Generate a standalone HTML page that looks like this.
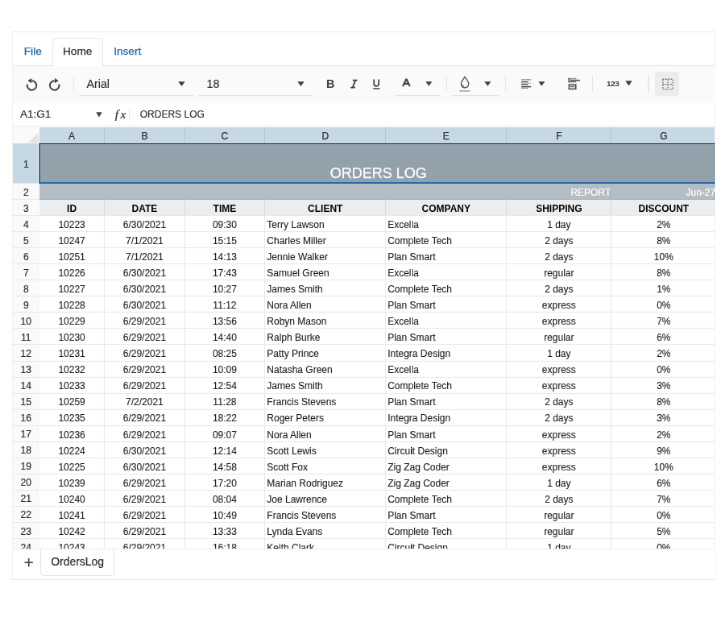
<!DOCTYPE html>
<html><head><meta charset="utf-8">
<style>
html,body{margin:0;padding:0;background:#fff;width:725px;height:636px;overflow:hidden;position:relative;font-family:"Liberation Sans", sans-serif;}
body div, body svg{position:absolute;}
.t{white-space:nowrap;}
</style></head><body>
<div id="w" style="left:0;top:0;width:900px;height:790px;transform:scale(0.805556);transform-origin:0 0;will-change:transform">
<div style="left:15.269px;top:38.607px;width:872.441px;height:681.020px;box-sizing:border-box;border:1px solid #f2f2f2;border-top-color:#e9e9e9;border-bottom-color:#e9e9e9;background:#fff"></div>
<div style="left:16.138px;top:80.565px;width:871.448px;height:1.117px;background:#e4e4e4"></div>
<div style="left:64.552px;top:47.172px;width:63.310px;height:34.759px;box-sizing:border-box;border:1px solid #e4e4e4;border-bottom:none;border-radius:5px 5px 0 0;background:#fff"></div>
<div class="t" style="left:29.793px;top:56.593px;font-size:13.655px;line-height:13.655px;color:#2567a3;-webkit-text-stroke:0.25px #2567a3">File</div>
<div class="t" style="left:77.959px;top:56.717px;font-size:13.655px;line-height:13.655px;color:#2f2f2f;-webkit-text-stroke:0.25px #2f2f2f">Home</div>
<div class="t" style="left:141.145px;top:56.593px;font-size:13.655px;line-height:13.655px;color:#2567a3;-webkit-text-stroke:0.25px #2567a3">Insert</div>
<div style="left:16.138px;top:81.683px;width:871.448px;height:46.055px;background:#fafafa"></div>
<svg style="left:28.552px;top:94.841px" width="22.345" height="19.862" viewBox="0 0 18 16"><path d="M8.45,4.2 A4.65,4.65 0 1 1 3.96,7.65" fill="none" stroke="#424242" stroke-width="1.6"/><polygon points="4.4,4.25 8.2,1.7 8.2,6.7" fill="#424242"/></svg>
<svg style="left:57.103px;top:94.841px" width="22.345" height="19.862" viewBox="0 0 18 16"><path d="M8.6,4.2 A4.65,4.65 0 1 0 13.09,7.65" fill="none" stroke="#424242" stroke-width="1.6"/><polygon points="12.6,4.25 8.8,1.7 8.8,6.7" fill="#424242"/></svg>
<div style="left:90.621px;top:94.345px;width:1.241px;height:19.862px;background:#e6e6e6"></div>
<div style="left:99.310px;top:117.931px;width:140.276px;height:1.241px;background:#e3e3e3"></div>
<div class="t" style="left:107.503px;top:96.784px;font-size:14.276px;line-height:14.276px;color:#2f2f2f;-webkit-text-stroke:0.15px #2f2f2f">Arial</div>
<svg style="left:220.345px;top:100.179px" width="10.924" height="8.193" viewBox="0 0 8.8 6.6"><polygon points="1,1 7.8,1 4.4,5.6" fill="#424242"/></svg>
<div style="left:247.034px;top:117.931px;width:140.276px;height:1.241px;background:#e3e3e3"></div>
<div class="t" style="left:256.469px;top:96.784px;font-size:14.276px;line-height:14.276px;color:#2f2f2f;-webkit-text-stroke:0.15px #2f2f2f">18</div>
<svg style="left:368.441px;top:100.179px" width="10.924" height="8.193" viewBox="0 0 8.8 6.6"><polygon points="1,1 7.8,1 4.4,5.6" fill="#424242"/></svg>
<div class="t" style="left:405.062px;top:97.052px;font-size:14.400px;line-height:14.400px;color:#424242;font-weight:bold">B</div>
<svg style="left:433.241px;top:98.069px" width="12.414" height="12.414" viewBox="0 0 10 10"><path d="M3.9,1.3 H8.5 M1.7,8.6 H6.3 M6.6,1.3 L3.8,8.6" fill="none" stroke="#424242" stroke-width="1.45"/></svg>
<svg style="left:461.793px;top:98.069px" width="12.414" height="13.655" viewBox="0 0 10 11"><path d="M1.8,0.5 V4.8 A2.1,2.1 0 0 0 6.6,4.8 V0.5" fill="none" stroke="#424242" stroke-width="1.4"/><rect x="1" y="9" width="6.6" height="1.2" fill="#424242"/></svg>
<svg style="left:496.551px;top:95.586px" width="14.897" height="18.621" viewBox="0 0 12 15"><path d="M2.5,9.0 L6,1.5 L9.5,9.0 M3.8,6.4 H8.2" fill="none" stroke="#424242" stroke-width="1.75" stroke-linejoin="bevel"/><rect x="1" y="13" width="10" height="1.5" fill="#ffffff"/></svg>
<svg style="left:526.841px;top:100.179px" width="10.676" height="7.945" viewBox="0 0 8.6 6.4"><polygon points="1,1 7.6,1 4.3,5.4" fill="#424242"/></svg>
<div style="left:490.345px;top:117.931px;width:55.862px;height:1.241px;background:#e3e3e3"></div>
<div style="left:553.655px;top:94.345px;width:1.241px;height:18.621px;background:#e6e6e6"></div>
<svg style="left:568.551px;top:93.103px" width="16.138" height="22.345" viewBox="0 0 13 18"><path d="M6.5,1.9 C7.8,3.9 10.3,6.4 10.3,9 A3.8,3.8 0 0 1 2.7,9 C2.7,6.4 5.2,3.9 6.5,1.9 Z" fill="none" stroke="#424242" stroke-width="0.95"/><path d="M4.1,9.6 A2.4,2.4 0 0 0 5.9,11.5" fill="none" stroke="#424242" stroke-width="0.8"/><rect x="1.1" y="15.3" width="10.6" height="1.5" fill="#a3b4c0"/></svg>
<svg style="left:599.586px;top:100.179px" width="10.676" height="7.945" viewBox="0 0 8.6 6.4"><polygon points="1,1 7.6,1 4.3,5.4" fill="#424242"/></svg>
<div style="left:562.345px;top:117.931px;width:57.103px;height:1.241px;background:#e3e3e3"></div>
<div style="left:626.896px;top:94.345px;width:1.241px;height:18.621px;background:#e6e6e6"></div>
<svg style="left:645.517px;top:95.586px" width="14.897" height="14.897" viewBox="0 0 12 12"><rect x="0.9" y="1.9" width="9.7" height="0.8" fill="#6e6e6e"/><rect x="0.9" y="4.0" width="7" height="1.0" fill="#3e3e3e"/><rect x="0.9" y="5.4" width="9.7" height="0.8" fill="#b4b4b4"/><rect x="0.9" y="6.7" width="7" height="1.0" fill="#3e3e3e"/><rect x="0.9" y="8.9" width="9.7" height="1.0" fill="#3e3e3e"/><rect x="0.9" y="10.2" width="7" height="1.0" fill="#858585"/></svg>
<svg style="left:667.365px;top:100.179px" width="10.676" height="7.945" viewBox="0 0 8.6 6.4"><polygon points="1,1 7.6,1 4.3,5.4" fill="#424242"/></svg>
<svg style="left:702.620px;top:94.345px" width="19.862" height="19.862" viewBox="0 0 16 16"><rect x="2.1" y="2.3" width="7.9" height="1.2" fill="#9a9a9a"/><rect x="2.1" y="2.3" width="1.2" height="4.3" fill="#424242"/><rect x="2.1" y="5.6" width="7.9" height="1.0" fill="#505050"/><rect x="4" y="4.0" width="9.7" height="1.1" fill="#424242"/><rect x="2.7" y="9.0" width="6.8" height="4.2" fill="none" stroke="#424242" stroke-width="1.2"/><rect x="4" y="10.3" width="4.5" height="1.2" fill="#707070"/></svg>
<div style="left:734.896px;top:94.345px;width:1.241px;height:19.862px;background:#e6e6e6"></div>
<div class="t" style="left:752.896px;top:99.345px;font-size:9.931px;line-height:9.931px;color:#424242;font-weight:bold;letter-spacing:-0.35px">123</div>
<svg style="left:774.744px;top:99.434px" width="10.924" height="8.690" viewBox="0 0 8.8 7"><polygon points="1,1 7.8,1 4.4,6" fill="#424242"/></svg>
<div style="left:804.413px;top:94.345px;width:1.241px;height:19.862px;background:#e6e6e6"></div>
<div style="left:813.103px;top:89.379px;width:29.793px;height:29.793px;background:#ececec;border-radius:3px"></div>
<svg style="left:820.551px;top:95.586px" width="16.138" height="16.138" viewBox="0 0 13 13"><g fill="none" stroke="#6a6a6a" stroke-width="1.05" stroke-dasharray="1.3,1.3"><rect x="1.5" y="1.8" width="10" height="10.2"/><path d="M6.5,1.8 V12 M1.5,6.9 H11.5"/></g></svg>
<div class="t" style="left:25.076px;top:135.277px;font-size:13.531px;line-height:13.531px;color:#2f2f2f;-webkit-text-stroke:0.2px #2f2f2f">A1:G1</div>
<svg style="left:117.931px;top:137.545px" width="9.931" height="8.690" viewBox="0 0 8 7"><polygon points="1,1 7,1 4.0,6" fill="#424242"/></svg>
<div class="t" style="left:142.759px;top:134.446px;font-size:15.393px;line-height:15.393px;color:#2f2f2f;letter-spacing:2.6px;-webkit-text-stroke:0.2px #2f2f2f;font-family:'Liberation Serif',serif;font-style:italic">fx</div>
<div style="left:160.138px;top:134.069px;width:1.241px;height:16.138px;background:#e6e6e6"></div>
<div class="t" style="left:173.793px;top:136.321px;font-size:12.004px;line-height:12.004px;color:#2f2f2f;-webkit-text-stroke:0.15px #2f2f2f">ORDERS LOG</div>
<div style="left:16.138px;top:156.290px;width:871.448px;height:1.117px;background:#ebebeb"></div>
<div style="left:0;top:0;width:887.089px;height:681.641px;overflow:hidden">
<div style="left:16.138px;top:157.655px;width:32.652px;height:19.862px;background:#fafafa"></div>
<svg style="left:16.138px;top:157.655px" width="32.276" height="19.862" viewBox="0 0 26 16"><polygon points="25.6,5.5 25.6,15.6 15,15.6" fill="#e4e4e4"/></svg>
<div style="left:48.790px;top:157.655px;width:869.831px;height:19.862px;background:#c6d8e3"></div>
<div style="left:129.348px;top:157.655px;width:1.000px;height:19.862px;background:#b4c7d3"></div>
<div class="t" style="left:-159.207px;width:496.551px;text-align:center;top:162.638px;font-size:12.004px;line-height:12.004px;color:#2f2f2f;-webkit-text-stroke:0.25px #2f2f2f">A</div>
<div style="left:228.534px;top:157.655px;width:1.000px;height:19.862px;background:#b4c7d3"></div>
<div class="t" style="left:-68.834px;width:496.551px;text-align:center;top:162.638px;font-size:12.004px;line-height:12.004px;color:#2f2f2f;-webkit-text-stroke:0.25px #2f2f2f">B</div>
<div style="left:328.341px;top:157.655px;width:1.000px;height:19.862px;background:#b4c7d3"></div>
<div class="t" style="left:30.662px;width:496.551px;text-align:center;top:162.638px;font-size:12.004px;line-height:12.004px;color:#2f2f2f;-webkit-text-stroke:0.25px #2f2f2f">C</div>
<div style="left:478.176px;top:157.655px;width:1.000px;height:19.862px;background:#b4c7d3"></div>
<div class="t" style="left:155.483px;width:496.551px;text-align:center;top:162.638px;font-size:12.004px;line-height:12.004px;color:#2f2f2f;-webkit-text-stroke:0.25px #2f2f2f">D</div>
<div style="left:628.382px;top:157.655px;width:1.000px;height:19.862px;background:#b4c7d3"></div>
<div class="t" style="left:305.503px;width:496.551px;text-align:center;top:162.638px;font-size:12.004px;line-height:12.004px;color:#2f2f2f;-webkit-text-stroke:0.25px #2f2f2f">E</div>
<div style="left:758.355px;top:157.655px;width:1.000px;height:19.862px;background:#b4c7d3"></div>
<div class="t" style="left:445.593px;width:496.551px;text-align:center;top:162.638px;font-size:12.004px;line-height:12.004px;color:#2f2f2f;-webkit-text-stroke:0.25px #2f2f2f">F</div>
<div style="left:888.327px;top:157.655px;width:1.000px;height:19.862px;background:#b4c7d3"></div>
<div class="t" style="left:575.565px;width:496.551px;text-align:center;top:162.638px;font-size:12.004px;line-height:12.004px;color:#2f2f2f;-webkit-text-stroke:0.25px #2f2f2f">G</div>
<div style="left:16.138px;top:177.517px;width:32.652px;height:50.739px;background:#c6d8e3"></div>
<div style="left:16.138px;top:227.256px;width:32.652px;height:1.000px;background:#e8e8e8"></div>
<div class="t" style="left:-216.000px;width:496.551px;text-align:center;top:197.894px;font-size:12.004px;line-height:12.004px;color:#2f2f2f;-webkit-text-stroke:0.2px #2f2f2f">1</div>
<div style="left:16.138px;top:228.256px;width:32.652px;height:20.023px;background:#fafafa"></div>
<div style="left:16.138px;top:247.279px;width:32.652px;height:1.000px;background:#e8e8e8"></div>
<div class="t" style="left:-216.000px;width:496.551px;text-align:center;top:233.025px;font-size:12.004px;line-height:12.004px;color:#2f2f2f;-webkit-text-stroke:0.2px #2f2f2f">2</div>
<div style="left:16.138px;top:248.279px;width:32.652px;height:20.023px;background:#fafafa"></div>
<div style="left:16.138px;top:267.303px;width:32.652px;height:1.000px;background:#e8e8e8"></div>
<div class="t" style="left:-216.000px;width:496.551px;text-align:center;top:253.048px;font-size:12.004px;line-height:12.004px;color:#2f2f2f;-webkit-text-stroke:0.2px #2f2f2f">3</div>
<div style="left:16.138px;top:268.303px;width:32.652px;height:20.023px;background:#fafafa"></div>
<div style="left:16.138px;top:287.326px;width:32.652px;height:1.000px;background:#e8e8e8"></div>
<div class="t" style="left:-216.000px;width:496.551px;text-align:center;top:273.071px;font-size:12.004px;line-height:12.004px;color:#2f2f2f;-webkit-text-stroke:0.2px #2f2f2f">4</div>
<div style="left:16.138px;top:288.326px;width:32.652px;height:20.023px;background:#fafafa"></div>
<div style="left:16.138px;top:307.349px;width:32.652px;height:1.000px;background:#e8e8e8"></div>
<div class="t" style="left:-216.000px;width:496.551px;text-align:center;top:293.095px;font-size:12.004px;line-height:12.004px;color:#2f2f2f;-webkit-text-stroke:0.2px #2f2f2f">5</div>
<div style="left:16.138px;top:308.350px;width:32.652px;height:20.023px;background:#fafafa"></div>
<div style="left:16.138px;top:327.373px;width:32.652px;height:1.000px;background:#e8e8e8"></div>
<div class="t" style="left:-216.000px;width:496.551px;text-align:center;top:313.118px;font-size:12.004px;line-height:12.004px;color:#2f2f2f;-webkit-text-stroke:0.2px #2f2f2f">6</div>
<div style="left:16.138px;top:328.373px;width:32.652px;height:20.023px;background:#fafafa"></div>
<div style="left:16.138px;top:347.396px;width:32.652px;height:1.000px;background:#e8e8e8"></div>
<div class="t" style="left:-216.000px;width:496.551px;text-align:center;top:333.142px;font-size:12.004px;line-height:12.004px;color:#2f2f2f;-webkit-text-stroke:0.2px #2f2f2f">7</div>
<div style="left:16.138px;top:348.396px;width:32.652px;height:20.023px;background:#fafafa"></div>
<div style="left:16.138px;top:367.420px;width:32.652px;height:1.000px;background:#e8e8e8"></div>
<div class="t" style="left:-216.000px;width:496.551px;text-align:center;top:353.165px;font-size:12.004px;line-height:12.004px;color:#2f2f2f;-webkit-text-stroke:0.2px #2f2f2f">8</div>
<div style="left:16.138px;top:368.420px;width:32.652px;height:20.023px;background:#fafafa"></div>
<div style="left:16.138px;top:387.443px;width:32.652px;height:1.000px;background:#e8e8e8"></div>
<div class="t" style="left:-216.000px;width:496.551px;text-align:center;top:373.189px;font-size:12.004px;line-height:12.004px;color:#2f2f2f;-webkit-text-stroke:0.2px #2f2f2f">9</div>
<div style="left:16.138px;top:388.443px;width:32.652px;height:20.023px;background:#fafafa"></div>
<div style="left:16.138px;top:407.467px;width:32.652px;height:1.000px;background:#e8e8e8"></div>
<div class="t" style="left:-216.000px;width:496.551px;text-align:center;top:393.212px;font-size:12.004px;line-height:12.004px;color:#2f2f2f;-webkit-text-stroke:0.2px #2f2f2f">10</div>
<div style="left:16.138px;top:408.467px;width:32.652px;height:20.023px;background:#fafafa"></div>
<div style="left:16.138px;top:427.490px;width:32.652px;height:1.000px;background:#e8e8e8"></div>
<div class="t" style="left:-216.000px;width:496.551px;text-align:center;top:413.236px;font-size:12.004px;line-height:12.004px;color:#2f2f2f;-webkit-text-stroke:0.2px #2f2f2f">11</div>
<div style="left:16.138px;top:428.490px;width:32.652px;height:20.023px;background:#fafafa"></div>
<div style="left:16.138px;top:447.514px;width:32.652px;height:1.000px;background:#e8e8e8"></div>
<div class="t" style="left:-216.000px;width:496.551px;text-align:center;top:433.259px;font-size:12.004px;line-height:12.004px;color:#2f2f2f;-webkit-text-stroke:0.2px #2f2f2f">12</div>
<div style="left:16.138px;top:448.514px;width:32.652px;height:20.023px;background:#fafafa"></div>
<div style="left:16.138px;top:467.537px;width:32.652px;height:1.000px;background:#e8e8e8"></div>
<div class="t" style="left:-216.000px;width:496.551px;text-align:center;top:453.282px;font-size:12.004px;line-height:12.004px;color:#2f2f2f;-webkit-text-stroke:0.2px #2f2f2f">13</div>
<div style="left:16.138px;top:468.537px;width:32.652px;height:20.023px;background:#fafafa"></div>
<div style="left:16.138px;top:487.560px;width:32.652px;height:1.000px;background:#e8e8e8"></div>
<div class="t" style="left:-216.000px;width:496.551px;text-align:center;top:473.306px;font-size:12.004px;line-height:12.004px;color:#2f2f2f;-webkit-text-stroke:0.2px #2f2f2f">14</div>
<div style="left:16.138px;top:488.560px;width:32.652px;height:20.023px;background:#fafafa"></div>
<div style="left:16.138px;top:507.584px;width:32.652px;height:1.000px;background:#e8e8e8"></div>
<div class="t" style="left:-216.000px;width:496.551px;text-align:center;top:493.329px;font-size:12.004px;line-height:12.004px;color:#2f2f2f;-webkit-text-stroke:0.2px #2f2f2f">15</div>
<div style="left:16.138px;top:508.584px;width:32.652px;height:20.023px;background:#fafafa"></div>
<div style="left:16.138px;top:527.607px;width:32.652px;height:1.000px;background:#e8e8e8"></div>
<div class="t" style="left:-216.000px;width:496.551px;text-align:center;top:513.353px;font-size:12.004px;line-height:12.004px;color:#2f2f2f;-webkit-text-stroke:0.2px #2f2f2f">16</div>
<div style="left:16.138px;top:528.607px;width:32.652px;height:20.023px;background:#fafafa"></div>
<div style="left:16.138px;top:547.631px;width:32.652px;height:1.000px;background:#e8e8e8"></div>
<div class="t" style="left:-216.000px;width:496.551px;text-align:center;top:533.376px;font-size:12.004px;line-height:12.004px;color:#2f2f2f;-webkit-text-stroke:0.2px #2f2f2f">17</div>
<div style="left:16.138px;top:548.631px;width:32.652px;height:20.023px;background:#fafafa"></div>
<div style="left:16.138px;top:567.654px;width:32.652px;height:1.000px;background:#e8e8e8"></div>
<div class="t" style="left:-216.000px;width:496.551px;text-align:center;top:553.400px;font-size:12.004px;line-height:12.004px;color:#2f2f2f;-webkit-text-stroke:0.2px #2f2f2f">18</div>
<div style="left:16.138px;top:568.654px;width:32.652px;height:20.023px;background:#fafafa"></div>
<div style="left:16.138px;top:587.678px;width:32.652px;height:1.000px;background:#e8e8e8"></div>
<div class="t" style="left:-216.000px;width:496.551px;text-align:center;top:573.423px;font-size:12.004px;line-height:12.004px;color:#2f2f2f;-webkit-text-stroke:0.2px #2f2f2f">19</div>
<div style="left:16.138px;top:588.678px;width:32.652px;height:20.023px;background:#fafafa"></div>
<div style="left:16.138px;top:607.701px;width:32.652px;height:1.000px;background:#e8e8e8"></div>
<div class="t" style="left:-216.000px;width:496.551px;text-align:center;top:593.446px;font-size:12.004px;line-height:12.004px;color:#2f2f2f;-webkit-text-stroke:0.2px #2f2f2f">20</div>
<div style="left:16.138px;top:608.701px;width:32.652px;height:20.023px;background:#fafafa"></div>
<div style="left:16.138px;top:627.724px;width:32.652px;height:1.000px;background:#e8e8e8"></div>
<div class="t" style="left:-216.000px;width:496.551px;text-align:center;top:613.470px;font-size:12.004px;line-height:12.004px;color:#2f2f2f;-webkit-text-stroke:0.2px #2f2f2f">21</div>
<div style="left:16.138px;top:628.725px;width:32.652px;height:20.023px;background:#fafafa"></div>
<div style="left:16.138px;top:647.748px;width:32.652px;height:1.000px;background:#e8e8e8"></div>
<div class="t" style="left:-216.000px;width:496.551px;text-align:center;top:633.493px;font-size:12.004px;line-height:12.004px;color:#2f2f2f;-webkit-text-stroke:0.2px #2f2f2f">22</div>
<div style="left:16.138px;top:648.748px;width:32.652px;height:20.023px;background:#fafafa"></div>
<div style="left:16.138px;top:667.771px;width:32.652px;height:1.000px;background:#e8e8e8"></div>
<div class="t" style="left:-216.000px;width:496.551px;text-align:center;top:653.517px;font-size:12.004px;line-height:12.004px;color:#2f2f2f;-webkit-text-stroke:0.2px #2f2f2f">23</div>
<div style="left:16.138px;top:668.771px;width:32.652px;height:20.023px;background:#fafafa"></div>
<div style="left:16.138px;top:687.795px;width:32.652px;height:1.000px;background:#e8e8e8"></div>
<div class="t" style="left:-216.000px;width:496.551px;text-align:center;top:673.540px;font-size:12.004px;line-height:12.004px;color:#2f2f2f;-webkit-text-stroke:0.2px #2f2f2f">24</div>
<div style="left:47.790px;top:177.517px;width:1.000px;height:504.000px;background:#e8e8e8"></div>
<div style="left:48.790px;top:177.517px;width:869.831px;height:50.739px;background:#93a1ab"></div>
<div style="left:48.790px;top:228.256px;width:869.831px;height:20.023px;background:#b3bdc3"></div>
<div style="left:48.790px;top:247.279px;width:869.831px;height:1.000px;background:#a7b1b7"></div>
<div style="left:758.355px;top:228.256px;width:1.000px;height:20.023px;background:#a9b3b9"></div>
<div style="left:48.790px;top:248.279px;width:869.831px;height:20.023px;background:#ebeef1"></div>
<div style="left:129.348px;top:248.279px;width:1.000px;height:20.023px;background:#d6dadd"></div>
<div style="left:228.534px;top:248.279px;width:1.000px;height:20.023px;background:#d6dadd"></div>
<div style="left:328.341px;top:248.279px;width:1.000px;height:20.023px;background:#d6dadd"></div>
<div style="left:478.176px;top:248.279px;width:1.000px;height:20.023px;background:#d6dadd"></div>
<div style="left:628.382px;top:248.279px;width:1.000px;height:20.023px;background:#d6dadd"></div>
<div style="left:758.355px;top:248.279px;width:1.000px;height:20.023px;background:#d6dadd"></div>
<div style="left:888.327px;top:248.279px;width:1.000px;height:20.023px;background:#d6dadd"></div>
<div style="left:48.790px;top:267.303px;width:869.831px;height:1.000px;background:#e8e8e8"></div>
<div style="left:48.790px;top:287.326px;width:869.831px;height:1.000px;background:#e8e8e8"></div>
<div style="left:48.790px;top:307.349px;width:869.831px;height:1.000px;background:#e8e8e8"></div>
<div style="left:48.790px;top:327.373px;width:869.831px;height:1.000px;background:#e8e8e8"></div>
<div style="left:48.790px;top:347.396px;width:869.831px;height:1.000px;background:#e8e8e8"></div>
<div style="left:48.790px;top:367.420px;width:869.831px;height:1.000px;background:#e8e8e8"></div>
<div style="left:48.790px;top:387.443px;width:869.831px;height:1.000px;background:#e8e8e8"></div>
<div style="left:48.790px;top:407.467px;width:869.831px;height:1.000px;background:#e8e8e8"></div>
<div style="left:48.790px;top:427.490px;width:869.831px;height:1.000px;background:#e8e8e8"></div>
<div style="left:48.790px;top:447.514px;width:869.831px;height:1.000px;background:#e8e8e8"></div>
<div style="left:48.790px;top:467.537px;width:869.831px;height:1.000px;background:#e8e8e8"></div>
<div style="left:48.790px;top:487.560px;width:869.831px;height:1.000px;background:#e8e8e8"></div>
<div style="left:48.790px;top:507.584px;width:869.831px;height:1.000px;background:#e8e8e8"></div>
<div style="left:48.790px;top:527.607px;width:869.831px;height:1.000px;background:#e8e8e8"></div>
<div style="left:48.790px;top:547.631px;width:869.831px;height:1.000px;background:#e8e8e8"></div>
<div style="left:48.790px;top:567.654px;width:869.831px;height:1.000px;background:#e8e8e8"></div>
<div style="left:48.790px;top:587.678px;width:869.831px;height:1.000px;background:#e8e8e8"></div>
<div style="left:48.790px;top:607.701px;width:869.831px;height:1.000px;background:#e8e8e8"></div>
<div style="left:48.790px;top:627.724px;width:869.831px;height:1.000px;background:#e8e8e8"></div>
<div style="left:48.790px;top:647.748px;width:869.831px;height:1.000px;background:#e8e8e8"></div>
<div style="left:48.790px;top:667.771px;width:869.831px;height:1.000px;background:#e8e8e8"></div>
<div style="left:48.790px;top:687.795px;width:869.831px;height:1.000px;background:#e8e8e8"></div>
<div style="left:129.348px;top:268.303px;width:1.000px;height:413.214px;background:#e8e8e8"></div>
<div style="left:228.534px;top:268.303px;width:1.000px;height:413.214px;background:#e8e8e8"></div>
<div style="left:328.341px;top:268.303px;width:1.000px;height:413.214px;background:#e8e8e8"></div>
<div style="left:478.176px;top:268.303px;width:1.000px;height:413.214px;background:#e8e8e8"></div>
<div style="left:628.382px;top:268.303px;width:1.000px;height:413.214px;background:#e8e8e8"></div>
<div style="left:758.355px;top:268.303px;width:1.000px;height:413.214px;background:#e8e8e8"></div>
<div style="left:888.327px;top:268.303px;width:1.000px;height:413.214px;background:#e8e8e8"></div>
<div style="left:48.041px;top:177.145px;width:868.965px;height:51.269px;box-sizing:border-box;border:2.359px solid #2a6aa6"></div>
<div class="t" style="left:221.586px;width:496.551px;text-align:center;top:206.225px;font-size:18.000px;line-height:18.000px;color:#fff;-webkit-text-stroke:0.25px #fff">ORDERS LOG</div>
<div class="t" style="left:261.683px;width:496.551px;text-align:right;top:233.149px;font-size:12.004px;line-height:12.004px;color:#ffffff;-webkit-text-stroke:0.2px #fff">REPORT</div>
<div class="t" style="left:391.655px;width:496.551px;text-align:right;top:233.149px;font-size:12.004px;line-height:12.004px;color:#ffffff;-webkit-text-stroke:0.2px #fff">Jun-27</div>
<div class="t" style="left:-159.207px;width:496.551px;text-align:center;top:253.420px;font-size:12.004px;line-height:12.004px;color:#000;font-weight:bold">ID</div>
<div class="t" style="left:-68.834px;width:496.551px;text-align:center;top:253.420px;font-size:12.004px;line-height:12.004px;color:#000;font-weight:bold">DATE</div>
<div class="t" style="left:30.662px;width:496.551px;text-align:center;top:253.420px;font-size:12.004px;line-height:12.004px;color:#000;font-weight:bold">TIME</div>
<div class="t" style="left:155.483px;width:496.551px;text-align:center;top:253.420px;font-size:12.004px;line-height:12.004px;color:#000;font-weight:bold">CLIENT</div>
<div class="t" style="left:305.503px;width:496.551px;text-align:center;top:253.420px;font-size:12.004px;line-height:12.004px;color:#000;font-weight:bold">COMPANY</div>
<div class="t" style="left:445.593px;width:496.551px;text-align:center;top:253.420px;font-size:12.004px;line-height:12.004px;color:#000;font-weight:bold">SHIPPING</div>
<div class="t" style="left:575.565px;width:496.551px;text-align:center;top:253.420px;font-size:12.004px;line-height:12.004px;color:#000;font-weight:bold">DISCOUNT</div>
<div class="t" style="left:-159.207px;width:496.551px;text-align:center;top:273.196px;font-size:12.004px;line-height:12.004px;color:#1f1f1f;-webkit-text-stroke:0.12px #1f1f1f">10223</div>
<div class="t" style="left:-68.834px;width:496.551px;text-align:center;top:273.196px;font-size:12.004px;line-height:12.004px;color:#1f1f1f;-webkit-text-stroke:0.12px #1f1f1f">6/30/2021</div>
<div class="t" style="left:30.662px;width:496.551px;text-align:center;top:273.196px;font-size:12.004px;line-height:12.004px;color:#1f1f1f;-webkit-text-stroke:0.12px #1f1f1f">09:30</div>
<div class="t" style="left:331.324px;top:273.196px;font-size:12.004px;line-height:12.004px;color:#1f1f1f;-webkit-text-stroke:0.12px #1f1f1f">Terry Lawson</div>
<div class="t" style="left:481.158px;top:273.196px;font-size:12.004px;line-height:12.004px;color:#1f1f1f;-webkit-text-stroke:0.12px #1f1f1f">Excella</div>
<div class="t" style="left:445.593px;width:496.551px;text-align:center;top:273.196px;font-size:12.004px;line-height:12.004px;color:#1f1f1f;-webkit-text-stroke:0.12px #1f1f1f">1 day</div>
<div class="t" style="left:575.565px;width:496.551px;text-align:center;top:273.196px;font-size:12.004px;line-height:12.004px;color:#1f1f1f;-webkit-text-stroke:0.12px #1f1f1f">2%</div>
<div class="t" style="left:-159.207px;width:496.551px;text-align:center;top:293.219px;font-size:12.004px;line-height:12.004px;color:#1f1f1f;-webkit-text-stroke:0.12px #1f1f1f">10247</div>
<div class="t" style="left:-68.834px;width:496.551px;text-align:center;top:293.219px;font-size:12.004px;line-height:12.004px;color:#1f1f1f;-webkit-text-stroke:0.12px #1f1f1f">7/1/2021</div>
<div class="t" style="left:30.662px;width:496.551px;text-align:center;top:293.219px;font-size:12.004px;line-height:12.004px;color:#1f1f1f;-webkit-text-stroke:0.12px #1f1f1f">15:15</div>
<div class="t" style="left:331.324px;top:293.219px;font-size:12.004px;line-height:12.004px;color:#1f1f1f;-webkit-text-stroke:0.12px #1f1f1f">Charles Miller</div>
<div class="t" style="left:481.158px;top:293.219px;font-size:12.004px;line-height:12.004px;color:#1f1f1f;-webkit-text-stroke:0.12px #1f1f1f">Complete Tech</div>
<div class="t" style="left:445.593px;width:496.551px;text-align:center;top:293.219px;font-size:12.004px;line-height:12.004px;color:#1f1f1f;-webkit-text-stroke:0.12px #1f1f1f">2 days</div>
<div class="t" style="left:575.565px;width:496.551px;text-align:center;top:293.219px;font-size:12.004px;line-height:12.004px;color:#1f1f1f;-webkit-text-stroke:0.12px #1f1f1f">8%</div>
<div class="t" style="left:-159.207px;width:496.551px;text-align:center;top:313.242px;font-size:12.004px;line-height:12.004px;color:#1f1f1f;-webkit-text-stroke:0.12px #1f1f1f">10251</div>
<div class="t" style="left:-68.834px;width:496.551px;text-align:center;top:313.242px;font-size:12.004px;line-height:12.004px;color:#1f1f1f;-webkit-text-stroke:0.12px #1f1f1f">7/1/2021</div>
<div class="t" style="left:30.662px;width:496.551px;text-align:center;top:313.242px;font-size:12.004px;line-height:12.004px;color:#1f1f1f;-webkit-text-stroke:0.12px #1f1f1f">14:13</div>
<div class="t" style="left:331.324px;top:313.242px;font-size:12.004px;line-height:12.004px;color:#1f1f1f;-webkit-text-stroke:0.12px #1f1f1f">Jennie Walker</div>
<div class="t" style="left:481.158px;top:313.242px;font-size:12.004px;line-height:12.004px;color:#1f1f1f;-webkit-text-stroke:0.12px #1f1f1f">Plan Smart</div>
<div class="t" style="left:445.593px;width:496.551px;text-align:center;top:313.242px;font-size:12.004px;line-height:12.004px;color:#1f1f1f;-webkit-text-stroke:0.12px #1f1f1f">2 days</div>
<div class="t" style="left:575.565px;width:496.551px;text-align:center;top:313.242px;font-size:12.004px;line-height:12.004px;color:#1f1f1f;-webkit-text-stroke:0.12px #1f1f1f">10%</div>
<div class="t" style="left:-159.207px;width:496.551px;text-align:center;top:333.266px;font-size:12.004px;line-height:12.004px;color:#1f1f1f;-webkit-text-stroke:0.12px #1f1f1f">10226</div>
<div class="t" style="left:-68.834px;width:496.551px;text-align:center;top:333.266px;font-size:12.004px;line-height:12.004px;color:#1f1f1f;-webkit-text-stroke:0.12px #1f1f1f">6/30/2021</div>
<div class="t" style="left:30.662px;width:496.551px;text-align:center;top:333.266px;font-size:12.004px;line-height:12.004px;color:#1f1f1f;-webkit-text-stroke:0.12px #1f1f1f">17:43</div>
<div class="t" style="left:331.324px;top:333.266px;font-size:12.004px;line-height:12.004px;color:#1f1f1f;-webkit-text-stroke:0.12px #1f1f1f">Samuel Green</div>
<div class="t" style="left:481.158px;top:333.266px;font-size:12.004px;line-height:12.004px;color:#1f1f1f;-webkit-text-stroke:0.12px #1f1f1f">Excella</div>
<div class="t" style="left:445.593px;width:496.551px;text-align:center;top:333.266px;font-size:12.004px;line-height:12.004px;color:#1f1f1f;-webkit-text-stroke:0.12px #1f1f1f">regular</div>
<div class="t" style="left:575.565px;width:496.551px;text-align:center;top:333.266px;font-size:12.004px;line-height:12.004px;color:#1f1f1f;-webkit-text-stroke:0.12px #1f1f1f">8%</div>
<div class="t" style="left:-159.207px;width:496.551px;text-align:center;top:353.289px;font-size:12.004px;line-height:12.004px;color:#1f1f1f;-webkit-text-stroke:0.12px #1f1f1f">10227</div>
<div class="t" style="left:-68.834px;width:496.551px;text-align:center;top:353.289px;font-size:12.004px;line-height:12.004px;color:#1f1f1f;-webkit-text-stroke:0.12px #1f1f1f">6/30/2021</div>
<div class="t" style="left:30.662px;width:496.551px;text-align:center;top:353.289px;font-size:12.004px;line-height:12.004px;color:#1f1f1f;-webkit-text-stroke:0.12px #1f1f1f">10:27</div>
<div class="t" style="left:331.324px;top:353.289px;font-size:12.004px;line-height:12.004px;color:#1f1f1f;-webkit-text-stroke:0.12px #1f1f1f">James Smith</div>
<div class="t" style="left:481.158px;top:353.289px;font-size:12.004px;line-height:12.004px;color:#1f1f1f;-webkit-text-stroke:0.12px #1f1f1f">Complete Tech</div>
<div class="t" style="left:445.593px;width:496.551px;text-align:center;top:353.289px;font-size:12.004px;line-height:12.004px;color:#1f1f1f;-webkit-text-stroke:0.12px #1f1f1f">2 days</div>
<div class="t" style="left:575.565px;width:496.551px;text-align:center;top:353.289px;font-size:12.004px;line-height:12.004px;color:#1f1f1f;-webkit-text-stroke:0.12px #1f1f1f">1%</div>
<div class="t" style="left:-159.207px;width:496.551px;text-align:center;top:373.313px;font-size:12.004px;line-height:12.004px;color:#1f1f1f;-webkit-text-stroke:0.12px #1f1f1f">10228</div>
<div class="t" style="left:-68.834px;width:496.551px;text-align:center;top:373.313px;font-size:12.004px;line-height:12.004px;color:#1f1f1f;-webkit-text-stroke:0.12px #1f1f1f">6/30/2021</div>
<div class="t" style="left:30.662px;width:496.551px;text-align:center;top:373.313px;font-size:12.004px;line-height:12.004px;color:#1f1f1f;-webkit-text-stroke:0.12px #1f1f1f">11:12</div>
<div class="t" style="left:331.324px;top:373.313px;font-size:12.004px;line-height:12.004px;color:#1f1f1f;-webkit-text-stroke:0.12px #1f1f1f">Nora Allen</div>
<div class="t" style="left:481.158px;top:373.313px;font-size:12.004px;line-height:12.004px;color:#1f1f1f;-webkit-text-stroke:0.12px #1f1f1f">Plan Smart</div>
<div class="t" style="left:445.593px;width:496.551px;text-align:center;top:373.313px;font-size:12.004px;line-height:12.004px;color:#1f1f1f;-webkit-text-stroke:0.12px #1f1f1f">express</div>
<div class="t" style="left:575.565px;width:496.551px;text-align:center;top:373.313px;font-size:12.004px;line-height:12.004px;color:#1f1f1f;-webkit-text-stroke:0.12px #1f1f1f">0%</div>
<div class="t" style="left:-159.207px;width:496.551px;text-align:center;top:393.336px;font-size:12.004px;line-height:12.004px;color:#1f1f1f;-webkit-text-stroke:0.12px #1f1f1f">10229</div>
<div class="t" style="left:-68.834px;width:496.551px;text-align:center;top:393.336px;font-size:12.004px;line-height:12.004px;color:#1f1f1f;-webkit-text-stroke:0.12px #1f1f1f">6/29/2021</div>
<div class="t" style="left:30.662px;width:496.551px;text-align:center;top:393.336px;font-size:12.004px;line-height:12.004px;color:#1f1f1f;-webkit-text-stroke:0.12px #1f1f1f">13:56</div>
<div class="t" style="left:331.324px;top:393.336px;font-size:12.004px;line-height:12.004px;color:#1f1f1f;-webkit-text-stroke:0.12px #1f1f1f">Robyn Mason</div>
<div class="t" style="left:481.158px;top:393.336px;font-size:12.004px;line-height:12.004px;color:#1f1f1f;-webkit-text-stroke:0.12px #1f1f1f">Excella</div>
<div class="t" style="left:445.593px;width:496.551px;text-align:center;top:393.336px;font-size:12.004px;line-height:12.004px;color:#1f1f1f;-webkit-text-stroke:0.12px #1f1f1f">express</div>
<div class="t" style="left:575.565px;width:496.551px;text-align:center;top:393.336px;font-size:12.004px;line-height:12.004px;color:#1f1f1f;-webkit-text-stroke:0.12px #1f1f1f">7%</div>
<div class="t" style="left:-159.207px;width:496.551px;text-align:center;top:413.360px;font-size:12.004px;line-height:12.004px;color:#1f1f1f;-webkit-text-stroke:0.12px #1f1f1f">10230</div>
<div class="t" style="left:-68.834px;width:496.551px;text-align:center;top:413.360px;font-size:12.004px;line-height:12.004px;color:#1f1f1f;-webkit-text-stroke:0.12px #1f1f1f">6/29/2021</div>
<div class="t" style="left:30.662px;width:496.551px;text-align:center;top:413.360px;font-size:12.004px;line-height:12.004px;color:#1f1f1f;-webkit-text-stroke:0.12px #1f1f1f">14:40</div>
<div class="t" style="left:331.324px;top:413.360px;font-size:12.004px;line-height:12.004px;color:#1f1f1f;-webkit-text-stroke:0.12px #1f1f1f">Ralph Burke</div>
<div class="t" style="left:481.158px;top:413.360px;font-size:12.004px;line-height:12.004px;color:#1f1f1f;-webkit-text-stroke:0.12px #1f1f1f">Plan Smart</div>
<div class="t" style="left:445.593px;width:496.551px;text-align:center;top:413.360px;font-size:12.004px;line-height:12.004px;color:#1f1f1f;-webkit-text-stroke:0.12px #1f1f1f">regular</div>
<div class="t" style="left:575.565px;width:496.551px;text-align:center;top:413.360px;font-size:12.004px;line-height:12.004px;color:#1f1f1f;-webkit-text-stroke:0.12px #1f1f1f">6%</div>
<div class="t" style="left:-159.207px;width:496.551px;text-align:center;top:433.383px;font-size:12.004px;line-height:12.004px;color:#1f1f1f;-webkit-text-stroke:0.12px #1f1f1f">10231</div>
<div class="t" style="left:-68.834px;width:496.551px;text-align:center;top:433.383px;font-size:12.004px;line-height:12.004px;color:#1f1f1f;-webkit-text-stroke:0.12px #1f1f1f">6/29/2021</div>
<div class="t" style="left:30.662px;width:496.551px;text-align:center;top:433.383px;font-size:12.004px;line-height:12.004px;color:#1f1f1f;-webkit-text-stroke:0.12px #1f1f1f">08:25</div>
<div class="t" style="left:331.324px;top:433.383px;font-size:12.004px;line-height:12.004px;color:#1f1f1f;-webkit-text-stroke:0.12px #1f1f1f">Patty Prince</div>
<div class="t" style="left:481.158px;top:433.383px;font-size:12.004px;line-height:12.004px;color:#1f1f1f;-webkit-text-stroke:0.12px #1f1f1f">Integra Design</div>
<div class="t" style="left:445.593px;width:496.551px;text-align:center;top:433.383px;font-size:12.004px;line-height:12.004px;color:#1f1f1f;-webkit-text-stroke:0.12px #1f1f1f">1 day</div>
<div class="t" style="left:575.565px;width:496.551px;text-align:center;top:433.383px;font-size:12.004px;line-height:12.004px;color:#1f1f1f;-webkit-text-stroke:0.12px #1f1f1f">2%</div>
<div class="t" style="left:-159.207px;width:496.551px;text-align:center;top:453.407px;font-size:12.004px;line-height:12.004px;color:#1f1f1f;-webkit-text-stroke:0.12px #1f1f1f">10232</div>
<div class="t" style="left:-68.834px;width:496.551px;text-align:center;top:453.407px;font-size:12.004px;line-height:12.004px;color:#1f1f1f;-webkit-text-stroke:0.12px #1f1f1f">6/29/2021</div>
<div class="t" style="left:30.662px;width:496.551px;text-align:center;top:453.407px;font-size:12.004px;line-height:12.004px;color:#1f1f1f;-webkit-text-stroke:0.12px #1f1f1f">10:09</div>
<div class="t" style="left:331.324px;top:453.407px;font-size:12.004px;line-height:12.004px;color:#1f1f1f;-webkit-text-stroke:0.12px #1f1f1f">Natasha Green</div>
<div class="t" style="left:481.158px;top:453.407px;font-size:12.004px;line-height:12.004px;color:#1f1f1f;-webkit-text-stroke:0.12px #1f1f1f">Excella</div>
<div class="t" style="left:445.593px;width:496.551px;text-align:center;top:453.407px;font-size:12.004px;line-height:12.004px;color:#1f1f1f;-webkit-text-stroke:0.12px #1f1f1f">express</div>
<div class="t" style="left:575.565px;width:496.551px;text-align:center;top:453.407px;font-size:12.004px;line-height:12.004px;color:#1f1f1f;-webkit-text-stroke:0.12px #1f1f1f">0%</div>
<div class="t" style="left:-159.207px;width:496.551px;text-align:center;top:473.430px;font-size:12.004px;line-height:12.004px;color:#1f1f1f;-webkit-text-stroke:0.12px #1f1f1f">10233</div>
<div class="t" style="left:-68.834px;width:496.551px;text-align:center;top:473.430px;font-size:12.004px;line-height:12.004px;color:#1f1f1f;-webkit-text-stroke:0.12px #1f1f1f">6/29/2021</div>
<div class="t" style="left:30.662px;width:496.551px;text-align:center;top:473.430px;font-size:12.004px;line-height:12.004px;color:#1f1f1f;-webkit-text-stroke:0.12px #1f1f1f">12:54</div>
<div class="t" style="left:331.324px;top:473.430px;font-size:12.004px;line-height:12.004px;color:#1f1f1f;-webkit-text-stroke:0.12px #1f1f1f">James Smith</div>
<div class="t" style="left:481.158px;top:473.430px;font-size:12.004px;line-height:12.004px;color:#1f1f1f;-webkit-text-stroke:0.12px #1f1f1f">Complete Tech</div>
<div class="t" style="left:445.593px;width:496.551px;text-align:center;top:473.430px;font-size:12.004px;line-height:12.004px;color:#1f1f1f;-webkit-text-stroke:0.12px #1f1f1f">express</div>
<div class="t" style="left:575.565px;width:496.551px;text-align:center;top:473.430px;font-size:12.004px;line-height:12.004px;color:#1f1f1f;-webkit-text-stroke:0.12px #1f1f1f">3%</div>
<div class="t" style="left:-159.207px;width:496.551px;text-align:center;top:493.453px;font-size:12.004px;line-height:12.004px;color:#1f1f1f;-webkit-text-stroke:0.12px #1f1f1f">10259</div>
<div class="t" style="left:-68.834px;width:496.551px;text-align:center;top:493.453px;font-size:12.004px;line-height:12.004px;color:#1f1f1f;-webkit-text-stroke:0.12px #1f1f1f">7/2/2021</div>
<div class="t" style="left:30.662px;width:496.551px;text-align:center;top:493.453px;font-size:12.004px;line-height:12.004px;color:#1f1f1f;-webkit-text-stroke:0.12px #1f1f1f">11:28</div>
<div class="t" style="left:331.324px;top:493.453px;font-size:12.004px;line-height:12.004px;color:#1f1f1f;-webkit-text-stroke:0.12px #1f1f1f">Francis Stevens</div>
<div class="t" style="left:481.158px;top:493.453px;font-size:12.004px;line-height:12.004px;color:#1f1f1f;-webkit-text-stroke:0.12px #1f1f1f">Plan Smart</div>
<div class="t" style="left:445.593px;width:496.551px;text-align:center;top:493.453px;font-size:12.004px;line-height:12.004px;color:#1f1f1f;-webkit-text-stroke:0.12px #1f1f1f">2 days</div>
<div class="t" style="left:575.565px;width:496.551px;text-align:center;top:493.453px;font-size:12.004px;line-height:12.004px;color:#1f1f1f;-webkit-text-stroke:0.12px #1f1f1f">8%</div>
<div class="t" style="left:-159.207px;width:496.551px;text-align:center;top:513.477px;font-size:12.004px;line-height:12.004px;color:#1f1f1f;-webkit-text-stroke:0.12px #1f1f1f">10235</div>
<div class="t" style="left:-68.834px;width:496.551px;text-align:center;top:513.477px;font-size:12.004px;line-height:12.004px;color:#1f1f1f;-webkit-text-stroke:0.12px #1f1f1f">6/29/2021</div>
<div class="t" style="left:30.662px;width:496.551px;text-align:center;top:513.477px;font-size:12.004px;line-height:12.004px;color:#1f1f1f;-webkit-text-stroke:0.12px #1f1f1f">18:22</div>
<div class="t" style="left:331.324px;top:513.477px;font-size:12.004px;line-height:12.004px;color:#1f1f1f;-webkit-text-stroke:0.12px #1f1f1f">Roger Peters</div>
<div class="t" style="left:481.158px;top:513.477px;font-size:12.004px;line-height:12.004px;color:#1f1f1f;-webkit-text-stroke:0.12px #1f1f1f">Integra Design</div>
<div class="t" style="left:445.593px;width:496.551px;text-align:center;top:513.477px;font-size:12.004px;line-height:12.004px;color:#1f1f1f;-webkit-text-stroke:0.12px #1f1f1f">2 days</div>
<div class="t" style="left:575.565px;width:496.551px;text-align:center;top:513.477px;font-size:12.004px;line-height:12.004px;color:#1f1f1f;-webkit-text-stroke:0.12px #1f1f1f">3%</div>
<div class="t" style="left:-159.207px;width:496.551px;text-align:center;top:533.500px;font-size:12.004px;line-height:12.004px;color:#1f1f1f;-webkit-text-stroke:0.12px #1f1f1f">10236</div>
<div class="t" style="left:-68.834px;width:496.551px;text-align:center;top:533.500px;font-size:12.004px;line-height:12.004px;color:#1f1f1f;-webkit-text-stroke:0.12px #1f1f1f">6/29/2021</div>
<div class="t" style="left:30.662px;width:496.551px;text-align:center;top:533.500px;font-size:12.004px;line-height:12.004px;color:#1f1f1f;-webkit-text-stroke:0.12px #1f1f1f">09:07</div>
<div class="t" style="left:331.324px;top:533.500px;font-size:12.004px;line-height:12.004px;color:#1f1f1f;-webkit-text-stroke:0.12px #1f1f1f">Nora Allen</div>
<div class="t" style="left:481.158px;top:533.500px;font-size:12.004px;line-height:12.004px;color:#1f1f1f;-webkit-text-stroke:0.12px #1f1f1f">Plan Smart</div>
<div class="t" style="left:445.593px;width:496.551px;text-align:center;top:533.500px;font-size:12.004px;line-height:12.004px;color:#1f1f1f;-webkit-text-stroke:0.12px #1f1f1f">express</div>
<div class="t" style="left:575.565px;width:496.551px;text-align:center;top:533.500px;font-size:12.004px;line-height:12.004px;color:#1f1f1f;-webkit-text-stroke:0.12px #1f1f1f">2%</div>
<div class="t" style="left:-159.207px;width:496.551px;text-align:center;top:553.524px;font-size:12.004px;line-height:12.004px;color:#1f1f1f;-webkit-text-stroke:0.12px #1f1f1f">10224</div>
<div class="t" style="left:-68.834px;width:496.551px;text-align:center;top:553.524px;font-size:12.004px;line-height:12.004px;color:#1f1f1f;-webkit-text-stroke:0.12px #1f1f1f">6/30/2021</div>
<div class="t" style="left:30.662px;width:496.551px;text-align:center;top:553.524px;font-size:12.004px;line-height:12.004px;color:#1f1f1f;-webkit-text-stroke:0.12px #1f1f1f">12:14</div>
<div class="t" style="left:331.324px;top:553.524px;font-size:12.004px;line-height:12.004px;color:#1f1f1f;-webkit-text-stroke:0.12px #1f1f1f">Scott Lewis</div>
<div class="t" style="left:481.158px;top:553.524px;font-size:12.004px;line-height:12.004px;color:#1f1f1f;-webkit-text-stroke:0.12px #1f1f1f">Circuit Design</div>
<div class="t" style="left:445.593px;width:496.551px;text-align:center;top:553.524px;font-size:12.004px;line-height:12.004px;color:#1f1f1f;-webkit-text-stroke:0.12px #1f1f1f">express</div>
<div class="t" style="left:575.565px;width:496.551px;text-align:center;top:553.524px;font-size:12.004px;line-height:12.004px;color:#1f1f1f;-webkit-text-stroke:0.12px #1f1f1f">9%</div>
<div class="t" style="left:-159.207px;width:496.551px;text-align:center;top:573.547px;font-size:12.004px;line-height:12.004px;color:#1f1f1f;-webkit-text-stroke:0.12px #1f1f1f">10225</div>
<div class="t" style="left:-68.834px;width:496.551px;text-align:center;top:573.547px;font-size:12.004px;line-height:12.004px;color:#1f1f1f;-webkit-text-stroke:0.12px #1f1f1f">6/30/2021</div>
<div class="t" style="left:30.662px;width:496.551px;text-align:center;top:573.547px;font-size:12.004px;line-height:12.004px;color:#1f1f1f;-webkit-text-stroke:0.12px #1f1f1f">14:58</div>
<div class="t" style="left:331.324px;top:573.547px;font-size:12.004px;line-height:12.004px;color:#1f1f1f;-webkit-text-stroke:0.12px #1f1f1f">Scott Fox</div>
<div class="t" style="left:481.158px;top:573.547px;font-size:12.004px;line-height:12.004px;color:#1f1f1f;-webkit-text-stroke:0.12px #1f1f1f">Zig Zag Coder</div>
<div class="t" style="left:445.593px;width:496.551px;text-align:center;top:573.547px;font-size:12.004px;line-height:12.004px;color:#1f1f1f;-webkit-text-stroke:0.12px #1f1f1f">express</div>
<div class="t" style="left:575.565px;width:496.551px;text-align:center;top:573.547px;font-size:12.004px;line-height:12.004px;color:#1f1f1f;-webkit-text-stroke:0.12px #1f1f1f">10%</div>
<div class="t" style="left:-159.207px;width:496.551px;text-align:center;top:593.571px;font-size:12.004px;line-height:12.004px;color:#1f1f1f;-webkit-text-stroke:0.12px #1f1f1f">10239</div>
<div class="t" style="left:-68.834px;width:496.551px;text-align:center;top:593.571px;font-size:12.004px;line-height:12.004px;color:#1f1f1f;-webkit-text-stroke:0.12px #1f1f1f">6/29/2021</div>
<div class="t" style="left:30.662px;width:496.551px;text-align:center;top:593.571px;font-size:12.004px;line-height:12.004px;color:#1f1f1f;-webkit-text-stroke:0.12px #1f1f1f">17:20</div>
<div class="t" style="left:331.324px;top:593.571px;font-size:12.004px;line-height:12.004px;color:#1f1f1f;-webkit-text-stroke:0.12px #1f1f1f">Marian Rodriguez</div>
<div class="t" style="left:481.158px;top:593.571px;font-size:12.004px;line-height:12.004px;color:#1f1f1f;-webkit-text-stroke:0.12px #1f1f1f">Zig Zag Coder</div>
<div class="t" style="left:445.593px;width:496.551px;text-align:center;top:593.571px;font-size:12.004px;line-height:12.004px;color:#1f1f1f;-webkit-text-stroke:0.12px #1f1f1f">1 day</div>
<div class="t" style="left:575.565px;width:496.551px;text-align:center;top:593.571px;font-size:12.004px;line-height:12.004px;color:#1f1f1f;-webkit-text-stroke:0.12px #1f1f1f">6%</div>
<div class="t" style="left:-159.207px;width:496.551px;text-align:center;top:613.594px;font-size:12.004px;line-height:12.004px;color:#1f1f1f;-webkit-text-stroke:0.12px #1f1f1f">10240</div>
<div class="t" style="left:-68.834px;width:496.551px;text-align:center;top:613.594px;font-size:12.004px;line-height:12.004px;color:#1f1f1f;-webkit-text-stroke:0.12px #1f1f1f">6/29/2021</div>
<div class="t" style="left:30.662px;width:496.551px;text-align:center;top:613.594px;font-size:12.004px;line-height:12.004px;color:#1f1f1f;-webkit-text-stroke:0.12px #1f1f1f">08:04</div>
<div class="t" style="left:331.324px;top:613.594px;font-size:12.004px;line-height:12.004px;color:#1f1f1f;-webkit-text-stroke:0.12px #1f1f1f">Joe Lawrence</div>
<div class="t" style="left:481.158px;top:613.594px;font-size:12.004px;line-height:12.004px;color:#1f1f1f;-webkit-text-stroke:0.12px #1f1f1f">Complete Tech</div>
<div class="t" style="left:445.593px;width:496.551px;text-align:center;top:613.594px;font-size:12.004px;line-height:12.004px;color:#1f1f1f;-webkit-text-stroke:0.12px #1f1f1f">2 days</div>
<div class="t" style="left:575.565px;width:496.551px;text-align:center;top:613.594px;font-size:12.004px;line-height:12.004px;color:#1f1f1f;-webkit-text-stroke:0.12px #1f1f1f">7%</div>
<div class="t" style="left:-159.207px;width:496.551px;text-align:center;top:633.617px;font-size:12.004px;line-height:12.004px;color:#1f1f1f;-webkit-text-stroke:0.12px #1f1f1f">10241</div>
<div class="t" style="left:-68.834px;width:496.551px;text-align:center;top:633.617px;font-size:12.004px;line-height:12.004px;color:#1f1f1f;-webkit-text-stroke:0.12px #1f1f1f">6/29/2021</div>
<div class="t" style="left:30.662px;width:496.551px;text-align:center;top:633.617px;font-size:12.004px;line-height:12.004px;color:#1f1f1f;-webkit-text-stroke:0.12px #1f1f1f">10:49</div>
<div class="t" style="left:331.324px;top:633.617px;font-size:12.004px;line-height:12.004px;color:#1f1f1f;-webkit-text-stroke:0.12px #1f1f1f">Francis Stevens</div>
<div class="t" style="left:481.158px;top:633.617px;font-size:12.004px;line-height:12.004px;color:#1f1f1f;-webkit-text-stroke:0.12px #1f1f1f">Plan Smart</div>
<div class="t" style="left:445.593px;width:496.551px;text-align:center;top:633.617px;font-size:12.004px;line-height:12.004px;color:#1f1f1f;-webkit-text-stroke:0.12px #1f1f1f">regular</div>
<div class="t" style="left:575.565px;width:496.551px;text-align:center;top:633.617px;font-size:12.004px;line-height:12.004px;color:#1f1f1f;-webkit-text-stroke:0.12px #1f1f1f">0%</div>
<div class="t" style="left:-159.207px;width:496.551px;text-align:center;top:653.641px;font-size:12.004px;line-height:12.004px;color:#1f1f1f;-webkit-text-stroke:0.12px #1f1f1f">10242</div>
<div class="t" style="left:-68.834px;width:496.551px;text-align:center;top:653.641px;font-size:12.004px;line-height:12.004px;color:#1f1f1f;-webkit-text-stroke:0.12px #1f1f1f">6/29/2021</div>
<div class="t" style="left:30.662px;width:496.551px;text-align:center;top:653.641px;font-size:12.004px;line-height:12.004px;color:#1f1f1f;-webkit-text-stroke:0.12px #1f1f1f">13:33</div>
<div class="t" style="left:331.324px;top:653.641px;font-size:12.004px;line-height:12.004px;color:#1f1f1f;-webkit-text-stroke:0.12px #1f1f1f">Lynda Evans</div>
<div class="t" style="left:481.158px;top:653.641px;font-size:12.004px;line-height:12.004px;color:#1f1f1f;-webkit-text-stroke:0.12px #1f1f1f">Complete Tech</div>
<div class="t" style="left:445.593px;width:496.551px;text-align:center;top:653.641px;font-size:12.004px;line-height:12.004px;color:#1f1f1f;-webkit-text-stroke:0.12px #1f1f1f">regular</div>
<div class="t" style="left:575.565px;width:496.551px;text-align:center;top:653.641px;font-size:12.004px;line-height:12.004px;color:#1f1f1f;-webkit-text-stroke:0.12px #1f1f1f">5%</div>
<div class="t" style="left:-159.207px;width:496.551px;text-align:center;top:673.664px;font-size:12.004px;line-height:12.004px;color:#1f1f1f;-webkit-text-stroke:0.12px #1f1f1f">10243</div>
<div class="t" style="left:-68.834px;width:496.551px;text-align:center;top:673.664px;font-size:12.004px;line-height:12.004px;color:#1f1f1f;-webkit-text-stroke:0.12px #1f1f1f">6/29/2021</div>
<div class="t" style="left:30.662px;width:496.551px;text-align:center;top:673.664px;font-size:12.004px;line-height:12.004px;color:#1f1f1f;-webkit-text-stroke:0.12px #1f1f1f">16:18</div>
<div class="t" style="left:331.324px;top:673.664px;font-size:12.004px;line-height:12.004px;color:#1f1f1f;-webkit-text-stroke:0.12px #1f1f1f">Keith Clark</div>
<div class="t" style="left:481.158px;top:673.664px;font-size:12.004px;line-height:12.004px;color:#1f1f1f;-webkit-text-stroke:0.12px #1f1f1f">Circuit Design</div>
<div class="t" style="left:445.593px;width:496.551px;text-align:center;top:673.664px;font-size:12.004px;line-height:12.004px;color:#1f1f1f;-webkit-text-stroke:0.12px #1f1f1f">1 day</div>
<div class="t" style="left:575.565px;width:496.551px;text-align:center;top:673.664px;font-size:12.004px;line-height:12.004px;color:#1f1f1f;-webkit-text-stroke:0.12px #1f1f1f">0%</div>
</div>
<div style="left:16.138px;top:681.641px;width:871.448px;height:36.497px;background:#fff"></div>
<div style="left:16.138px;top:718.510px;width:871.448px;height:1.117px;background:#e9e9e9"></div>
<div style="left:49.655px;top:681.517px;width:91.862px;height:33.517px;box-sizing:border-box;border:1px solid #e4e4e4;border-top:none;border-radius:0 0 5px 5px;background:#fff"></div>
<div class="t" style="left:63.310px;top:690.975px;font-size:13.903px;line-height:13.903px;color:#2f2f2f;-webkit-text-stroke:0.2px #2f2f2f">OrdersLog</div>
<div style="left:16.138px;top:681.144px;width:871.448px;height:0.993px;background:#ececec"></div>
<svg style="left:29.793px;top:692.689px" width="12.414" height="12.414" viewBox="0 0 10 10"><rect x="0.4" y="3.6" width="8.4" height="1.3" fill="#424242"/><rect x="3.95" y="0" width="1.3" height="8.4" fill="#424242"/></svg>
</div>
</body></html>
